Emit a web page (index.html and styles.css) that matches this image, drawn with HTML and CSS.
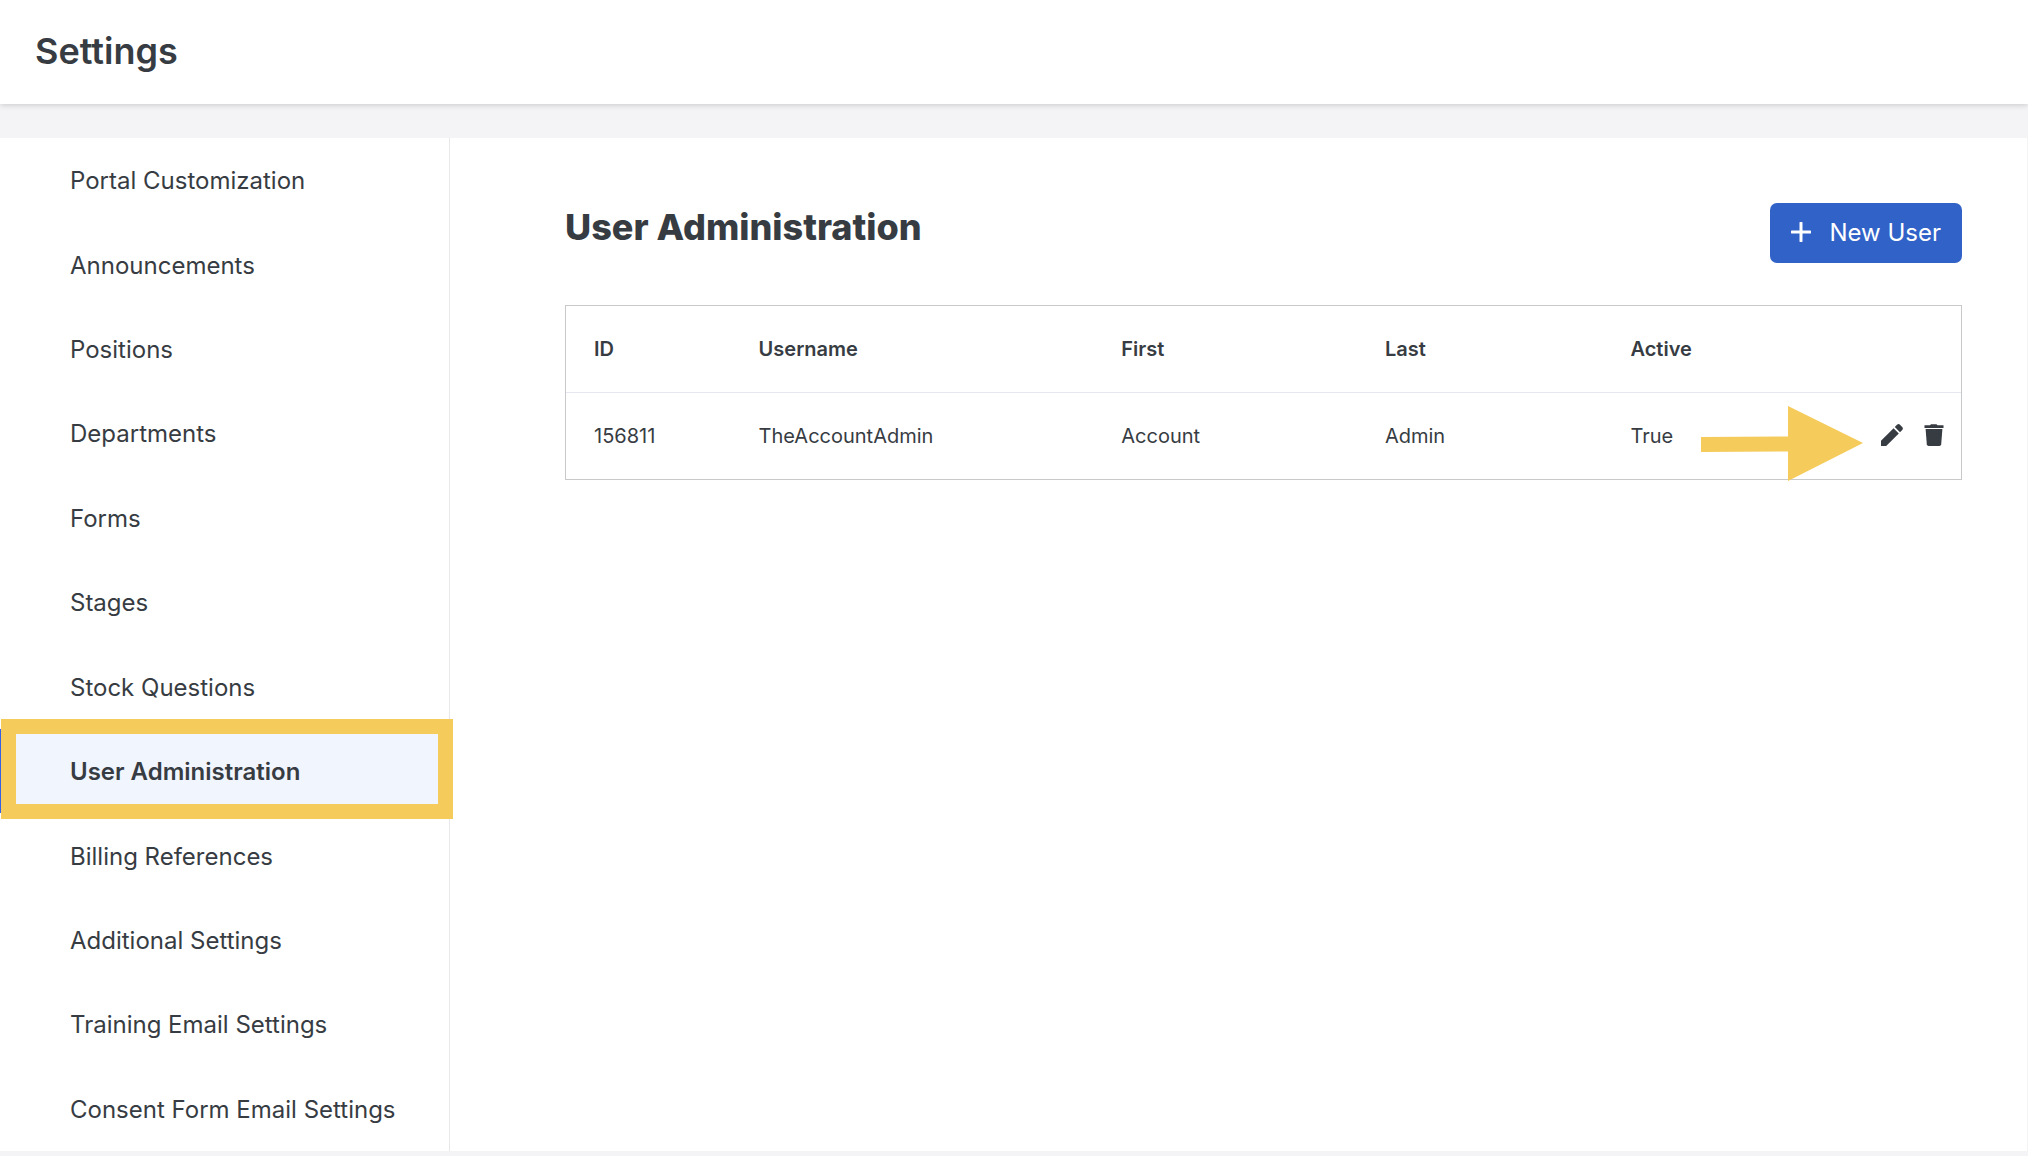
FILE: index.html
```html
<!DOCTYPE html>
<html lang="en">

<head>
    <meta charset="utf-8">
    <title>Settings</title>
    <link rel="stylesheet" href="styles.css">
</head>

<body>
    <header class="header">
        <h1>Settings</h1>
    </header>
    <div class="panel">
        <nav class="sidebar">
            <a href="#">Portal Customization</a>
            <a href="#">Announcements</a>
            <a href="#">Positions</a>
            <a href="#">Departments</a>
            <a href="#">Forms</a>
            <a href="#">Stages</a>
            <a href="#">Stock Questions</a>
            <a href="#" class="active" aria-current="page">User Administration</a>
            <a href="#">Billing References</a>
            <a href="#">Additional Settings</a>
            <a href="#">Training Email Settings</a>
            <a href="#">Consent Form Email Settings</a>
        </nav>
        <main class="content">
            <div class="contentHeader">
                <h2>User Administration</h2>
                <button class="newUser" type="button">
                    <svg width="20" height="20" viewBox="0 0 20 20" aria-hidden="true">
                        <path d="M10 1v18M1 10h18" stroke="currentColor" stroke-width="3" stroke-linecap="round" />
                    </svg>
                    New User
                </button>
            </div>
            <table class="users">
                <colgroup>
                    <col class="colId">
                    <col class="colUsername">
                    <col class="colFirst">
                    <col class="colLast">
                    <col>
                    <col class="colActions">
                </colgroup>
                <thead>
                    <tr>
                        <th>ID</th>
                        <th>Username</th>
                        <th>First</th>
                        <th>Last</th>
                        <th>Active</th>
                        <td></td>
                    </tr>
                </thead>
                <tbody>
                    <tr>
                        <td>156811</td>
                        <td>TheAccountAdmin</td>
                        <td>Account</td>
                        <td>Admin</td>
                        <td>True</td>
                        <td class="actionsCell">
                            <div class="actions">
                                <button type="button" aria-label="Edit">
                                    <svg width="22" height="22" viewBox="0 0 22 22">
                                        <path d="M0 22v-5.2L12.6 4.2l5.2 5.2L5.2 22z" />
                                        <path d="M13.8 3l2.2-2.2q1.5-1.4 3 0l2.2 2.2q1.4 1.5 0 3L19 8.2z" />
                                    </svg>
                                </button>
                                <button type="button" aria-label="Delete">
                                    <svg width="20" height="22" viewBox="0 0 20 22">
                                        <path d="M.5 1.3H6l1-1.1h5.500l1 1.100h6v2.600H.5z" />
                                        <path d="M1.600 5h16.800l-1.200 15.200q-.2 1.800-1.900 1.800H4.700q-1.700 0-1.900-1.800z" />
                                    </svg>
                                </button>
                            </div>
                            <svg class="arrow" width="162" height="75" viewBox="0 0 162 75" aria-hidden="true">
                                <path d="M0 31l87-.5V0l75 37-75 38V45.500L0 46z" />
                            </svg>
                        </td>
                    </tr>
                </tbody>
            </table>
        </main>
    </div>
</body>

</html>
```
FILE: styles.css
```css
* {
    box-sizing: border-box;
}

body {
    display: flex;
    flex-direction: column;
    min-height: 100vh;
    margin: 0;
    padding-bottom: 5px;
    background-color: #f4f4f7;
    font-family: 'Inter', sans-serif;
    font-size: 24px;
    color: #373c43;
}

h1,
h2 {
    margin: 0;
    font-size: 36px;
    line-height: 48px;
}

h1 {
    font-weight: 600;
}

h2 {
    font-weight: 800;
}

button {
    border: none;
    font-family: inherit;
    cursor: pointer;
}

.header {
    padding: 27px 35px 29px;
    background-color: white;
    box-shadow: 0 1px 6px rgba(0, 0, 0, 0.18);
}

.panel {
    display: flex;
    flex: 1;
    margin-top: 34px;
    margin-right: 1px;
    background-color: white;
}

.sidebar {
    display: grid;
    grid-auto-rows: 1fr;
    width: 450px;
    flex-shrink: 0;
    border-right: 1px solid #e8e8ea;
}

.sidebar a {
    display: flex;
    align-items: center;
    min-height: 64px;
    padding: 1px 24px 0 70px;
    color: inherit;
    text-decoration: none;
}

.sidebar .active {
    position: relative;
    background-color: #f1f5fe;
    box-shadow: inset 3px 0 #3560e8;
    font-weight: 600;
}

/* highlight frame round the current page */
.sidebar .active::after {
    content: "";
    position: absolute;
    inset: -10px -4px -6px 1px;
    border: 15px solid #f5cc5b;
}

.content {
    flex: 1;
    padding: 65px 65px 65px 115px;
}

.contentHeader {
    display: flex;
    justify-content: space-between;
    align-items: flex-start;
    margin-bottom: 42px;
}

.newUser {
    display: flex;
    align-items: center;
    gap: 18px;
    height: 60px;
    padding: 0 21px 2px;
    border-radius: 7px;
    background-color: #3062c8;
    font-size: 24px;
    color: white;
}

.users {
    width: 100%;
    table-layout: fixed;
    border-collapse: separate;
    border-spacing: 0;
    border: 1px solid #c8c9cb;
    font-size: 20px;
}

.users th,
.users td {
    height: 86px;
    padding: 0 0 0 28px;
    text-align: left;
}

.users th {
    font-weight: 600;
}

.users thead th,
.users thead td {
    height: 87px;
    border-bottom: 1px solid #e5e8f1;
}

.colId {
    width: 11.8%;
}

.colUsername {
    width: 26%;
}

.colFirst {
    width: 18.9%;
}

.colLast {
    width: 17.6%;
}

.colActions {
    width: 120px;
}

.users .actionsCell {
    position: relative;
    padding: 0 17px 2px 0;
}

.actions {
    display: flex;
    justify-content: flex-end;
    gap: 21px;
}

.actions button {
    padding: 0;
    background: none;
}

.actions svg {
    display: block;
    fill: #373c43;
}

.arrow {
    position: absolute;
    top: 13px;
    right: 98px;
    fill: #f5cc5b;
}
```
